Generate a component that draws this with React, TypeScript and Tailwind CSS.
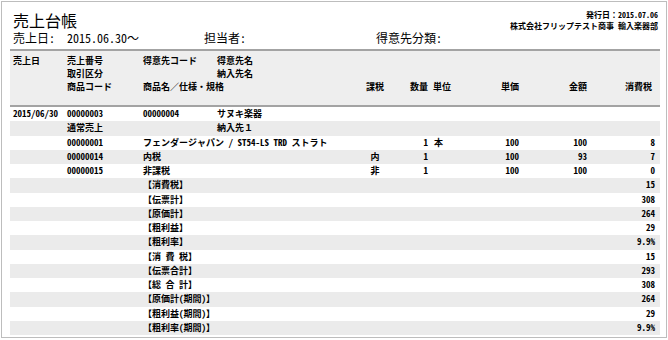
import React from "react";

const FONT = {
  fontFamily:
    '"Noto Sans Mono CJK JP", "Noto Sans CJK JP", "Noto Sans CJK SC", monospace',
};

const GRID =
  "grid grid-cols-[54px_76px_74px_145px_26px_40px_42px_49px_68px_68px] pl-[3px] pr-[4px]";

type R = {
  date?: string;
  no?: string;
  code?: string;
  name?: string;
  wide?: string;
  tax?: string;
  qty?: string;
  unit?: string;
  price?: string;
  amount?: string;
  vat?: string;
};

const rows: R[] = [
  { date: "2015/06/30", no: "00000003", code: "00000004", name: "サヌキ楽器" },
  { no: "通常売上", name: "納入先１" },
  {
    no: "00000001",
    wide: "フェンダージャパン / ST54-LS TRD ストラト",
    qty: "1",
    unit: "本",
    price: "100",
    amount: "100",
    vat: "8",
  },
  { no: "00000014", wide: "内税", tax: "内", qty: "1", price: "100", amount: "93", vat: "7" },
  { no: "00000015", wide: "非課税", tax: "非", qty: "1", price: "100", amount: "100", vat: "0" },
  { wide: "【消費税】", vat: "15" },
  { wide: "【伝票計】", vat: "308" },
  { wide: "【原価計】", vat: "264" },
  { wide: "【粗利益】", vat: "29" },
  { wide: "【粗利率】", vat: "9.9%" },
  { wide: "【消 費 税】", vat: "15" },
  { wide: "【伝票合計】", vat: "293" },
  { wide: "【総 合 計】", vat: "308" },
  { wide: "【原価計(期間)】", vat: "264" },
  { wide: "【粗利益(期間)】", vat: "29" },
  { wide: "【粗利率(期間)】", vat: "9.9%" },
];

function Row({ r, i }: { r: R; i: number }) {
  return (
    <div
      className={`${GRID} h-[14.25px] items-center text-[9px] leading-[14px] font-semibold text-black whitespace-nowrap ${
        i % 2 === 1 ? "bg-[#ebebeb]" : "bg-white"
      }`}
    >
      <div>{r.date}</div>
      <div>{r.no}</div>
      {r.wide !== undefined ? (
        <div className="col-span-2">{r.wide}</div>
      ) : (
        <>
          <div>{r.code}</div>
          <div>{r.name}</div>
        </>
      )}
      <div className="text-center">{r.tax}</div>
      <div className="text-right">{r.qty}</div>
      <div className="pl-[6px]">{r.unit}</div>
      <div className="text-right">{r.price}</div>
      <div className="text-right">{r.amount}</div>
      <div className="text-right">{r.vat}</div>
    </div>
  );
}

export default function App() {
  return (
    <div className="w-[668px] h-[340px] bg-white p-[1px]" style={FONT}>
      <div className="w-[666px] h-[337px] border border-[#bdbdbd] pl-[8px] pr-[6px] flex flex-col">
        {/* Top section */}
        <div className="h-[47px] flex flex-col">
          <div className="flex justify-between items-start h-[29px]">
            <div className="pl-[3px] mt-[10px] text-[16px] leading-[16px] text-black">
              売上台帳
            </div>
            <div className="mt-[7px] pr-[2px] text-right text-[8px] leading-[11px] font-semibold text-black">
              <div>発行日：2015.07.06</div>
              <div>株式会社フリップテスト商事 輸入楽器部</div>
            </div>
          </div>
          <div className="flex pl-[3px] text-[12px] leading-[14px] text-black">
            <span className="w-[54px]">売上日:</span>
            <span className="w-[137px]">2015.06.30～</span>
            <span className="w-[172px]">担当者:</span>
            <span>得意先分類:</span>
          </div>
        </div>

        {/* Header band */}
        <div className="h-[58px] border-t-2 border-b-2 border-[#a3a3a3] bg-[#eeeeee] pt-[3px] text-[9px] leading-[13px] font-bold text-black whitespace-nowrap">
          <div className={GRID}>
            <div>売上日</div>
            <div>売上番号</div>
            <div>得意先コード</div>
            <div>得意先名</div>
          </div>
          <div className={GRID}>
            <div></div>
            <div>取引区分</div>
            <div></div>
            <div>納入先名</div>
          </div>
          <div className={GRID}>
            <div></div>
            <div>商品コード</div>
            <div className="col-span-2">商品名／仕様・規格</div>
            <div className="text-center">課税</div>
            <div className="text-right">数量</div>
            <div className="pl-[5px]">単位</div>
            <div className="text-right">単価</div>
            <div className="text-right">金額</div>
            <div className="text-right pr-[3px]">消費税</div>
          </div>
        </div>

        {/* Data rows */}
        <div className="flex flex-col">
          {rows.map((r, i) => (
            <Row key={i} r={r} i={i} />
          ))}
        </div>
      </div>
    </div>
  );
}
